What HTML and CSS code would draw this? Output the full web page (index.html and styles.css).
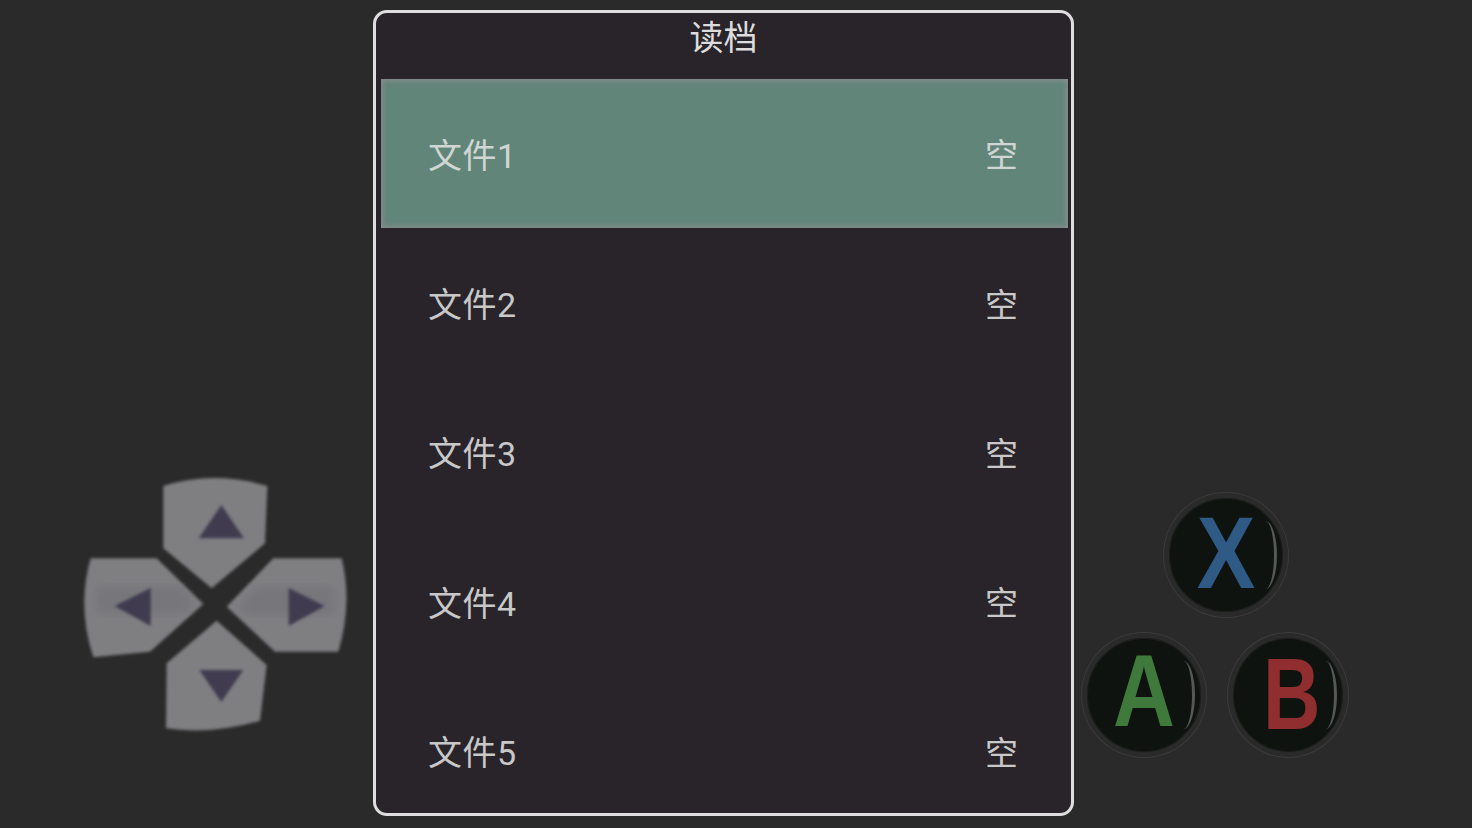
FILE: index.html
```html
<!DOCTYPE html>
<html>
<head>
	<meta charset="utf-8">
	<title>读档</title>
	<link rel="stylesheet" href="styles.css">
</head>
<body>
	<div class="screen">
		<!-- 方向键 -->
		<div class="left">
			<svg class="dpad" viewBox="0 0 930 870">
				<defs>
					<filter id="soft"><feGaussianBlur stdDeviation="4"/></filter>
					<filter id="softer"><feGaussianBlur stdDeviation="14"/></filter>
				</defs>
				<g fill="#7f7f82" filter="url(#soft)">
					<path d="M310 78 Q460 30 622 78 L615 250 L455 385 L310 265 Z"/>
					<path d="M92 295 L290 295 L430 432 L270 575 L100 592 Q50 440 92 295 Z"/>
					<path d="M640 295 L845 295 Q878 430 835 575 L645 575 L500 440 Z"/>
					<path d="M470 482 L620 615 L600 782 Q450 825 318 805 L320 610 Z"/>
				</g>
				<g fill="#6d6f75" fill-opacity="0.55" filter="url(#softer)">
					<path d="M110 380 L360 380 L400 432 L380 460 L110 460 Z"/>
					<path d="M820 380 L590 380 L535 440 L560 465 L820 465 Z"/>
				</g>
				<g fill="#3f3a50" filter="url(#soft)">
					<path d="M484 135 L552 235 L416 235 Z"/>
					<path d="M164 438 L272 384 L272 498 Z"/>
					<path d="M794 438 L686 384 L686 498 Z"/>
					<path d="M484 726 L418 630 L550 630 Z"/>
				</g>
			</svg>
		</div>

		<!-- 读档弹窗 -->
		<div class="dialog">
			<div class="title">读档</div>
			<ul class="files">
				<li class="now"><span>文件1</span><span>空</span></li>
				<li><span>文件2</span><span>空</span></li>
				<li><span>文件3</span><span>空</span></li>
				<li><span>文件4</span><span>空</span></li>
				<li><span>文件5</span><span>空</span></li>
			</ul>
		</div>

		<!-- ABX键 -->
		<div class="right">
			<div class="pad">
				<div class="btn x"><span>X</span></div>
				<div class="bottom">
					<div class="btn a"><span>A</span></div>
					<div class="btn b"><span>B</span></div>
				</div>
			</div>
		</div>
	</div>
</body>
</html>
```
FILE: styles.css
```css
*{
	margin: 0;
	padding: 0;
	box-sizing: border-box;
}
html,body{
	height: 100%;
	overflow: hidden;
}
body{
	background: #2a2a2a;
	font-family: Roboto, "Noto Sans CJK SC", sans-serif;
}
.screen{
	display: flex;
	height: 828px;
}
.left{
	width: 373px;
	padding: 460px 0 0 60px;
}
.dpad{
	display: block;
	width: 310px;
	height: 290px;
}
.dialog{
	width: 701px;
	height: 806px;
	margin-top: 10px;
	padding: 0 3px 0 5px;
	background: #28242a;
	border: 3px solid #dedede;
	border-radius: 14px;
	overflow: hidden;
}
.title{
	height: 66px;
	padding-right: 2px;
	line-height: 50px;
	text-align: center;
	font-size: 34px;
	color: #dcdcdc;
}
.files{
	list-style: none;
}
.files li{
	display: flex;
	justify-content: space-between;
	align-items: center;
	height: 149.4px;
	padding: 0 50px 1px 47px;
	font-size: 34px;
	letter-spacing: 0.5px;
	color: #c8c8c8;
}
.files li span:last-child{
	font-size: 33px;
	letter-spacing: 0;
}
.files li.now{
	background: #62857a;
	box-shadow: inset 0 0 5px 2px #858d8a;
	color: #cfd6d3;
}
.right{
	flex: 1;
	padding: 493px 0 0 8px;
}
.pad{
	width: 266px;
	display: flex;
	flex-direction: column;
}
.bottom{
	display: flex;
	justify-content: space-between;
	margin-top: 16px;
}
.btn{
	position: relative;
	display: flex;
	align-items: center;
	justify-content: center;
	width: 124px;
	height: 124px;
	background: #0f1310;
	border: 5px solid #2a2a2a;
	border-radius: 50%;
	box-shadow: 0 0 0 1px #3c3c3c, inset 0 0 0 1px #1d1f1d;
}
.btn:after{
	content: "";
	position: absolute;
	top: 23px;
	right: 6px;
	width: 20px;
	height: 68px;
	border-right: 3px solid #565857;
	border-radius: 50%;
}
.btn span{
	font-family: "Liberation Sans", sans-serif;
	font-size: 102px;
	font-weight: bold;
	line-height: 1;
}
.x{
	margin-left: 82px;
}
.x span{
	color: #2f5a86;
	transform: translateY(-2px) scaleX(0.86);
}
.a span{
	color: #3f7a3c;
	transform: translateY(-4px) scaleX(0.84);
}
.b{
	width: 120px;
}
.b span{
	color: #8f2d2f;
	transform: translate(4px, -1px) scaleX(0.78);
}
```
